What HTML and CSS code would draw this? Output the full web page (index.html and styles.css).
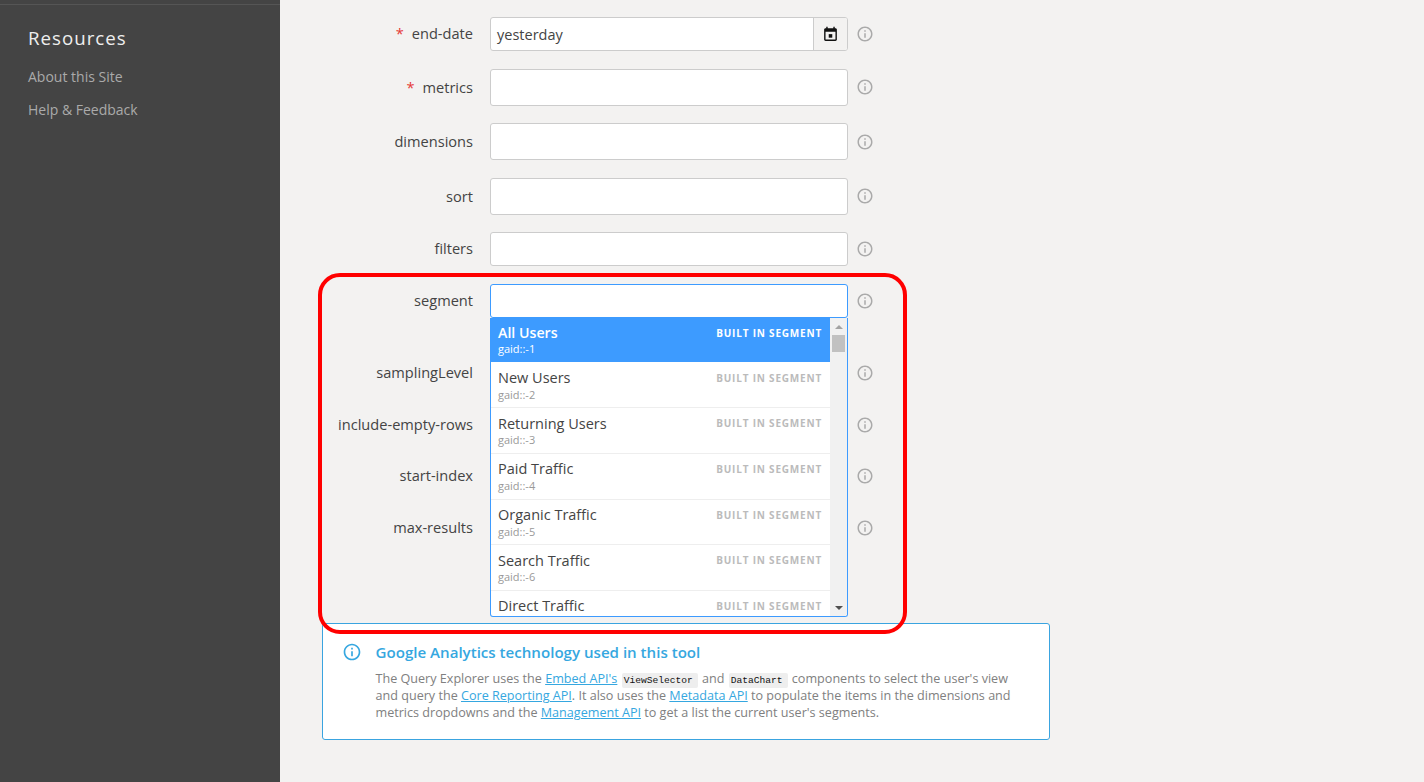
FILE: index.html
```html
<!DOCTYPE html>
<html lang="en">
<head>
<meta charset="utf-8">
<title>Query Explorer</title>
<link rel="stylesheet" href="styles.css">
</head>
<body>
<div class="page">
  <aside class="sidebar">
    <section class="side-section">
      <h2 class="side-title">Resources</h2>
      <a class="side-link" href="#">About this Site</a>
      <a class="side-link" href="#">Help &amp; Feedback</a>
    </section>
  </aside>
  <main class="main">
    <form class="form">
      <div class="row row-short">
        <label class="label"><span class="req">*</span>end-date</label>
        <div class="field group"><span class="group-value">yesterday</span><span class="addon"><svg class="cal" viewBox="0 0 24 24"><path d="M16 1v2H8V1H6v2H5c-1.11 0-1.99.9-1.99 2L3 19c0 1.1.89 2 2 2h14c1.1 0 2-.9 2-2V5c0-1.1-.9-2-2-2h-1V1h-2zm3 18H5V8h14v11z"/><rect x="9.5" y="11.5" width="5" height="5"/></svg></span></div>
        <svg class="info" viewBox="0 0 24 24"><use href="#i-info"/></svg>
      </div>
      <div class="row">
        <label class="label label-low"><span class="req">*</span>metrics</label>
        <div class="field"></div>
        <svg class="info" viewBox="0 0 24 24"><use href="#i-info"/></svg>
      </div>
      <div class="row">
        <label class="label">dimensions</label>
        <div class="field"></div>
        <svg class="info" viewBox="0 0 24 24"><use href="#i-info"/></svg>
      </div>
      <div class="row">
        <label class="label label-low">sort</label>
        <div class="field"></div>
        <svg class="info" viewBox="0 0 24 24"><use href="#i-info"/></svg>
      </div>
      <div class="row row-short">
        <label class="label">filters</label>
        <div class="field"></div>
        <svg class="info" viewBox="0 0 24 24"><use href="#i-info"/></svg>
      </div>
      <div class="row row-short row-segment">
        <label class="label">segment</label>
        <div class="field field-open"></div>
        <svg class="info" viewBox="0 0 24 24"><use href="#i-info"/></svg>
        <div class="dropdown">
          <ul class="list">
            <li class="item item-active"><div class="item-top"><span class="item-name">All Users</span><span class="item-tag">BUILT IN SEGMENT</span></div><div class="item-id">gaid::-1</div></li>
            <li class="item"><div class="item-top"><span class="item-name">New Users</span><span class="item-tag">BUILT IN SEGMENT</span></div><div class="item-id">gaid::-2</div></li>
            <li class="item"><div class="item-top"><span class="item-name">Returning Users</span><span class="item-tag">BUILT IN SEGMENT</span></div><div class="item-id">gaid::-3</div></li>
            <li class="item"><div class="item-top"><span class="item-name">Paid Traffic</span><span class="item-tag">BUILT IN SEGMENT</span></div><div class="item-id">gaid::-4</div></li>
            <li class="item"><div class="item-top"><span class="item-name">Organic Traffic</span><span class="item-tag">BUILT IN SEGMENT</span></div><div class="item-id">gaid::-5</div></li>
            <li class="item"><div class="item-top"><span class="item-name">Search Traffic</span><span class="item-tag">BUILT IN SEGMENT</span></div><div class="item-id">gaid::-6</div></li>
            <li class="item item-cut"><div class="item-top"><span class="item-name">Direct Traffic</span><span class="item-tag">BUILT IN SEGMENT</span></div></li>
          </ul>
          <div class="scrollbar">
            <span class="arrow arrow-up"></span>
            <span class="thumb"></span>
            <span class="arrow arrow-down"></span>
          </div>
        </div>
      </div>
      <div class="row row-short">
        <label class="label">samplingLevel</label>
        <div class="field field-hidden"></div>
        <svg class="info" viewBox="0 0 24 24"><use href="#i-info"/></svg>
      </div>
      <div class="row row-short">
        <label class="label">include-empty-rows</label>
        <div class="field field-hidden"></div>
        <svg class="info" viewBox="0 0 24 24"><use href="#i-info"/></svg>
      </div>
      <div class="row row-short">
        <label class="label">start-index</label>
        <div class="field field-hidden"></div>
        <svg class="info" viewBox="0 0 24 24"><use href="#i-info"/></svg>
      </div>
      <div class="row row-short">
        <label class="label">max-results</label>
        <div class="field field-hidden"></div>
        <svg class="info" viewBox="0 0 24 24"><use href="#i-info"/></svg>
      </div>
    </form>
    <section class="callout">
      <svg class="callout-icon" viewBox="0 0 24 24"><use href="#i-info"/></svg>
      <div class="callout-body">
        <h3 class="callout-title">Google Analytics technology used in this tool</h3>
        <p class="callout-text">The Query Explorer uses the <a href="#">Embed API's</a> <code>ViewSelector</code> and <code>DataChart</code> components to select the user's view and query the <a href="#">Core Reporting API</a>. It also uses the <a href="#">Metadata API</a> to populate the items in the dimensions and metrics dropdowns and the <a href="#">Management API</a> to get a list the current user's segments.</p>
      </div>
    </section>
    <div class="annotation"></div>
  </main>
</div>
<svg class="defs" width="0" height="0"><defs><path id="i-info" d="M11 7h2v2h-2zm0 4h2v6h-2zm1-9C6.48 2 2 6.48 2 12s4.48 10 10 10 10-4.48 10-10S17.52 2 12 2zm0 18c-4.41 0-8-3.59-8-8s3.59-8 8-8 8 3.59 8 8-3.59 8-8 8z"/></defs></svg>
</body>
</html>
```
FILE: styles.css
```css
* { box-sizing: border-box; }
html, body { margin: 0; height: 100%; overflow: hidden; }
body { font-family: "Open Sans", sans-serif; background: #f3f2f1; color: #444; }
.defs { position: absolute; }
.page { display: flex; height: 782px; }

.sidebar { width: 280px; flex: none; background: #444; padding-top: 4px; }
.side-section { border-top: 1px solid #555; padding: 19px 28px 0; display: flex; flex-direction: column; }
.side-title { margin: 0 0 16px; font-size: 18.7px; line-height: 27px; font-weight: 400; letter-spacing: 1px; color: #eee; }
.side-link { font-size: 14px; line-height: 19px; margin-bottom: 14px; color: #aaa; text-decoration: none; }

.main { position: relative; flex: 1; padding: 17px 0 0 42px; }
.form { display: flex; flex-direction: column; gap: 17.5px; }
.row { display: flex; align-items: center; height: 37px; position: relative; }
.row-short { height: 34px; }
.row-segment { margin-bottom: 21px; }
.label { width: 151px; flex: none; text-align: right; font-size: 14.6px; margin-bottom: 2px; color: #444; }
.label-low { margin-bottom: 0; }
.req { color: #e53935; margin-right: 8px; }
.field { width: 358px; height: 100%; margin-left: 17px; flex: none; background: #fff; border: 1px solid #ccc; border-radius: 3px; }
.field-open { border-color: #3d9bff; }
.field-hidden { visibility: hidden; }
.group { display: flex; align-items: center; overflow: hidden; }
.group-value { flex: 1; padding-left: 6px; font-size: 14.5px; color: #444; }
.addon { width: 34px; height: 100%; background: #f3f2f1; border-left: 1px solid #ccc; padding-right: 1px; display: flex; align-items: center; justify-content: center; }
.cal { width: 17px; height: 17px; fill: #111; }
.info { width: 18px; height: 18px; margin-left: 8px; fill: #aaa; flex: none; }

.dropdown { position: absolute; left: 168px; top: 34px; width: 358px; height: 299px; display: flex; background: #fff; border: 1px solid #3d9bff; border-top: 0; border-radius: 0 0 3px 3px; overflow: hidden; z-index: 2; }
.list { list-style: none; margin: 0; padding: 0; width: 339px; flex: none; overflow: hidden; }
.item { height: 45.7px; padding: 4px 8px 0 7px; border-bottom: 1px solid #eee; }
.item-active { background: #3d9bff; color: #fff; border-bottom: 0; height: 44px; margin-bottom: 1px; padding-top: 4px; }
.item-cut { border-bottom: 0; height: 26px; }
.item-top { display: flex; justify-content: space-between; align-items: center; height: 22px; }
.item-name { font-size: 14.5px; color: #444; }
.item-tag { font-size: 10px; font-weight: 700; letter-spacing: 0.8px; color: #bbb; }
.item-id { font-size: 11px; line-height: 15px; margin-top: -2px; color: #999; }
.item-active .item-name { color: #fff; font-weight: 600; font-size: 14.2px; }
.item-active .item-tag { color: #fff; }
.item-active .item-id { color: #fff; margin-top: -3px; }
.scrollbar { flex: 1; background: #f1f1f1; display: flex; flex-direction: column; align-items: center; padding: 7px 0 6px; }
.arrow { width: 0; height: 0; border-left: 4px solid transparent; border-right: 4px solid transparent; flex: none; }
.arrow-up { border-bottom: 4px solid #a3a3a3; }
.arrow-down { border-top: 4px solid #505050; margin-top: auto; }
.thumb { width: 13px; height: 17px; margin-top: 6px; background: #c1c1c1; flex: none; }

.callout { position: absolute; left: 42px; top: 623px; width: 728px; height: 117px; display: flex; background: #fff; border: 1px solid #3aa4e0; border-radius: 3px; padding: 18px 20px 0 18.5px; }
.callout-icon { width: 20px; height: 20px; flex: none; fill: #35a7e0; margin-right: 14px; }
.callout-title { margin: 0 0 8px; font-size: 15.1px; line-height: 20px; font-weight: 600; color: #35a7e0; }
.callout-text { margin: 0; font-size: 12.6px; line-height: 17px; color: #808080; }
.callout-text a { color: #35a7e0; text-decoration: underline; }
.callout-text code { font-family: "Liberation Mono", monospace; font-size: 9.6px; line-height: 0; background: #eee; color: #111; padding: 2px 5px 2px 2px; border-radius: 2px; margin: 0 1px; }

.annotation { position: absolute; left: 38px; top: 273px; width: 589px; height: 361px; border: 4px solid #f00; border-radius: 22px; pointer-events: none; z-index: 3; }
```
